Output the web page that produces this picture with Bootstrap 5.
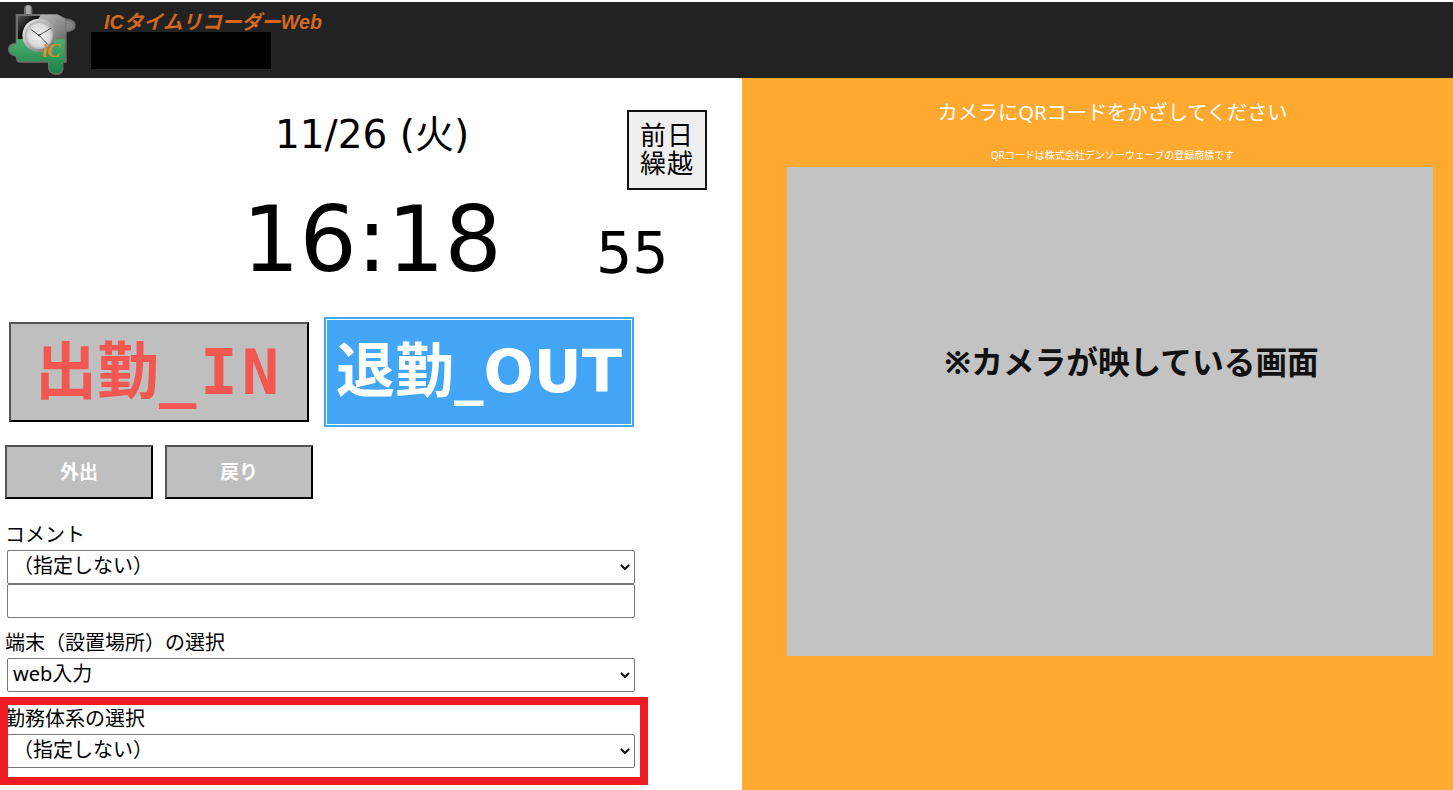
<!DOCTYPE html>
<html lang="ja">
<head>
<meta charset="utf-8">
<title>ICタイムリコーダーWeb</title>
<link href="https://cdn.jsdelivr.net/npm/bootstrap@5.3.0/dist/css/bootstrap.min.css" rel="stylesheet">
<style>
html,body{height:100%;}
body{font-family:"Noto Sans","Noto Sans CJK JP",sans-serif;background:#fff;color:#000;overflow:hidden;padding-top:2px;}
.tr-head{height:76px;background:#222;}
.tr-logo{width:80px;height:76px;margin-left:4px;flex:none;}
.tr-brand{margin-left:7px;}
.tr-title{font-family:"Liberation Sans","Noto Sans CJK JP",sans-serif;font-weight:700;font-style:italic;font-size:19.7px;line-height:20px;color:#d2691e;margin:10px 0 0 13px;}
.tr-mask{width:180px;height:37px;background:#000;}
.tr-main{height:712px;}
.tr-left{width:742px;flex:none;position:relative;padding-top:32px;}
.tr-right{flex:1;background:#ffa931;color:#fff;}
.tr-daterow{height:80px;}
.tr-date{width:627px;padding-left:117px;text-align:center;font-family:"DejaVu Sans","Noto Sans CJK JP",sans-serif;font-size:39px;line-height:50px;}
.tr-carry{width:80px;height:80px;background:#efefef;border:2px solid #111;font-family:"Liberation Sans","Noto Sans CJK JP",sans-serif;font-size:26px;line-height:28px;letter-spacing:1px;padding:0;color:#000;border-radius:0;}
.tr-timerow{height:115px;}
.tr-time{width:744px;text-align:center;font-family:"DejaVu Sans",sans-serif;font-size:90px;line-height:100px;}
.tr-sec{font-family:"DejaVu Sans",sans-serif;font-size:57px;line-height:80px;position:absolute;left:596px;top:135px;}
.tr-big{font-family:"DejaVu Sans","Noto Sans CJK JP",sans-serif;font-weight:700;border-radius:0;padding:0;white-space:nowrap;}
.tr-in{width:300px;height:100px;margin:17px 0 0 9px;background:#bfbfbf;color:#f25752;font-size:62px;border:2px solid;border-color:#555 #000 #000 #555;}
.tr-mono{font-family:"DejaVu Sans Mono",monospace;letter-spacing:4px;}
.tr-out{width:310px;height:110px;margin:12px 0 0 15px;background:#42a5f5;color:#fff;font-size:59px;border:2px solid #42a5f5;outline:1px solid #fff;outline-offset:-3px;}
.tr-small{width:148px;height:54px;background:#bfbfbf;color:#fff;font-size:19px;font-weight:700;border:2px solid;border-color:#555 #000 #000 #555;border-radius:0;padding:0;}
.tr-subs{gap:12px;margin:18px 0 0 5px;}
.tr-form{padding:23px 0 0 5px;width:635px;}
.tr-label{font-size:20px;line-height:25px;padding-bottom:3px;margin:0;}
.tr-label-b{margin-top:12px;}
.tr-label-c{margin-top:14px;}
.tr-form .form-select,.tr-form .form-control{width:628px;height:34px;margin-left:2px;padding:0 20px 3px 5px;font-size:20px;line-height:28px;color:#000;border:1px solid #767676;border-radius:2px;box-shadow:none;}
.tr-form .form-select{background-image:url("data:image/svg+xml,%3csvg xmlns='http://www.w3.org/2000/svg' viewBox='0 0 10 7'%3e%3cpath d='M1 1l4 4 4-4' fill='none' stroke='%23111' stroke-width='2'/%3e%3c/svg%3e");background-position:right 4px center;background-size:10px 7px;}
.tr-note{position:absolute;left:0;top:619px;width:648px;height:88px;border:8px solid #ed1c24;pointer-events:none;}
.tr-hint{font-size:20.2px;line-height:28px;padding:20px 0 0 30px;margin:0;text-align:center;}
.tr-tm{font-size:10px;line-height:14px;margin:22px 0 5px;padding-left:30px;text-align:center;}
.tr-cam{width:646px;height:489px;margin-left:45px;padding:173px 0 0 43px;background:#c3c3c3;color:#111;font-size:31.7px;line-height:44px;font-weight:700;text-align:center;}
</style>
</head>
<body>
<header class="tr-head d-flex align-items-start">
  <svg class="tr-logo" viewBox="0 6 240 228" aria-label="logo">
    <defs>
      <linearGradient id="lg" x1="0" y1="0" x2="0" y2="1"><stop offset="0" stop-color="#4bb06f"/><stop offset="1" stop-color="#1a7f44"/></linearGradient>
      <linearGradient id="lt" x1="0" y1="0" x2="1" y2="1"><stop offset="0" stop-color="#c4c4c4"/><stop offset="1" stop-color="#6e6e6e"/></linearGradient>
      <linearGradient id="lk" x1="0" y1="0" x2="1" y2="1"><stop offset="0" stop-color="#555"/><stop offset=".5" stop-color="#050505"/><stop offset="1" stop-color="#222"/></linearGradient>
      <radialGradient id="lf"><stop offset="0" stop-color="#f2f2f2"/><stop offset=".8" stop-color="#d9d9d9"/><stop offset="1" stop-color="#aaa"/></radialGradient>
      <linearGradient id="lr" x1="0" y1="0" x2="1" y2="1"><stop offset="0" stop-color="#f5f5f5"/><stop offset="1" stop-color="#666"/></linearGradient>
    </defs>
    <path d="M35 42H60V28Q60 15 72 15Q85 15 85 28V42H160L185 55Q215 58 215 75Q215 95 188 97V188H178V210Q175 225 155 225Q135 222 132 205V188H48Q35 188 35 170Q12 165 12 148Q12 130 35 128Z" fill="#6f6f6f"/>
    <path d="M66 18Q72 14 80 18V42H66Z" fill="#a8a8a8"/>
    <path d="M42 48H110L60 118H42Z" fill="url(#lk)"/>
    <path d="M110 44H160L184 58V118H70Z" fill="url(#lt)"/>
    <path d="M185 62Q208 62 208 76Q208 90 185 92Z" fill="#858585"/>
    <path d="M38 118H182V184H176V208Q172 220 155 220Q138 218 136 204V184H48Q38 184 38 168Q17 163 17 148Q17 134 38 132Z" fill="url(#lg)"/>
    <circle cx="105" cy="106" r="50" fill="url(#lr)"/>
    <circle cx="105" cy="106" r="42" fill="url(#lf)"/>
    <path d="M105 106L142 84M105 106L80 88M105 106L132 134" stroke="#333" stroke-width="2.5" fill="none"/>
    <circle cx="105" cy="106" r="3" fill="#333"/>
    <text x="114" y="170" font-family="Liberation Serif" font-style="italic" font-weight="700" font-size="58" fill="#e8892b">iC</text>
  </svg>
  <div class="tr-brand">
    <div class="tr-title">ICタイムリコーダーWeb</div>
    <div class="tr-mask"></div>
  </div>
</header>
<main class="tr-main d-flex">
  <section class="tr-left">
    <div class="tr-daterow d-flex">
      <div class="tr-date">11/26 (火)</div>
      <button type="button" class="btn tr-carry">前日<br>繰越</button>
    </div>
    <div class="tr-timerow">
      <div class="tr-time">16:18</div>
      <div class="tr-sec">55</div>
    </div>
    <div class="d-flex align-items-start">
      <button type="button" class="btn tr-big tr-in">出勤<span class="tr-mono">_IN</span></button>
      <button type="button" class="btn tr-big tr-out">退勤_OUT</button>
    </div>
    <div class="d-flex tr-subs">
      <button type="button" class="btn tr-small">外出</button>
      <button type="button" class="btn tr-small">戻り</button>
    </div>
    <form class="tr-form">
      <label class="tr-label d-block">コメント</label>
      <select class="form-select"><option>（指定しない）</option></select>
      <input class="form-control" type="text">
      <label class="tr-label tr-label-b d-block">端末（設置場所）の選択</label>
      <select class="form-select"><option>web入力</option></select>
      <label class="tr-label tr-label-c d-block">勤務体系の選択</label>
      <select class="form-select"><option>（指定しない）</option></select>
    </form>
    <div class="tr-note"></div>
  </section>
  <section class="tr-right">
    <p class="tr-hint">カメラにQRコードをかざしてください</p>
    <p class="tr-tm">QRコードは株式会社デンソーウェーブの登録商標です</p>
    <div class="tr-cam">※カメラが映している画面</div>
  </section>
</main>
<script src="https://cdn.jsdelivr.net/npm/bootstrap@5.3.0/dist/js/bootstrap.bundle.min.js"></script>
</body>
</html>
